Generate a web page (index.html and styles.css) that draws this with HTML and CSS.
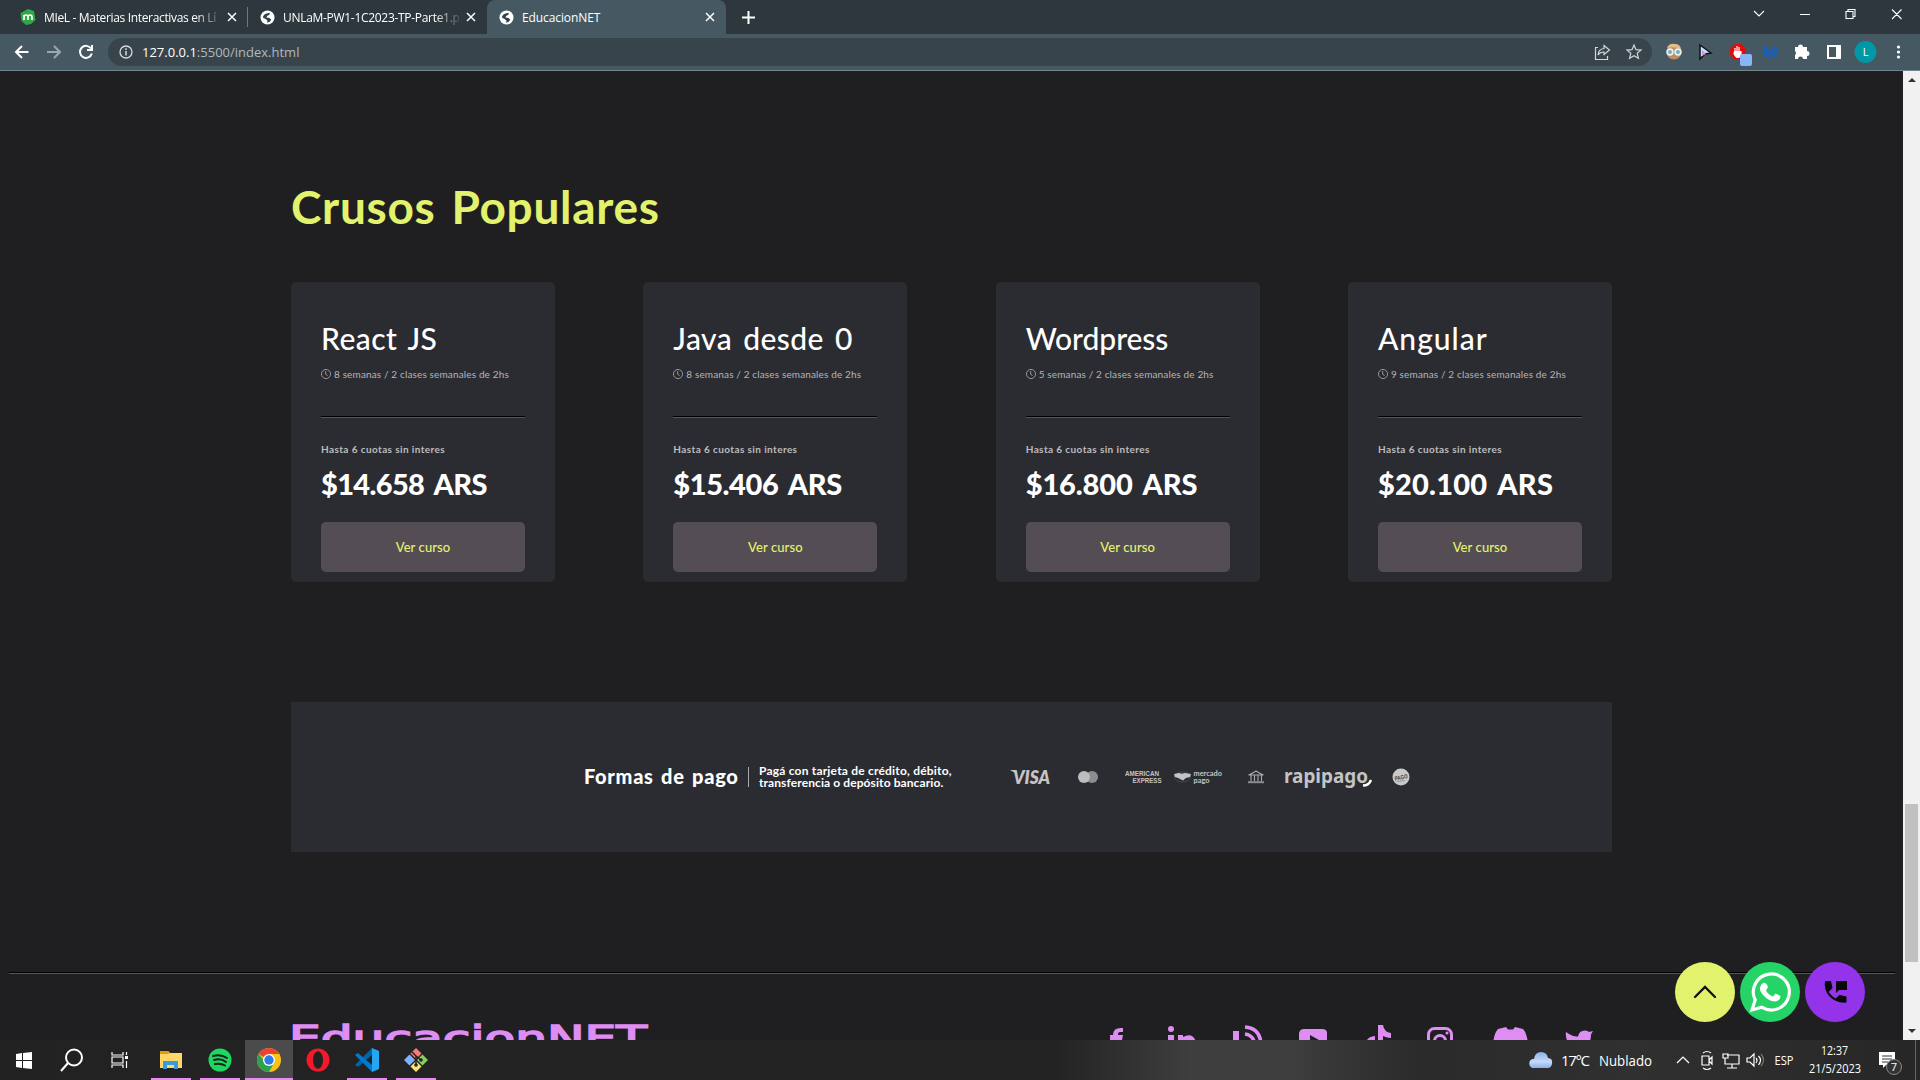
FILE: index.html
```html
<!DOCTYPE html>
<html lang="es"><head><meta charset="utf-8"><title>EducacionNET</title><link rel="stylesheet" href="styles.css"></head>
<body>
<svg class="defs" width="0" height="0">
<symbol id="globe" viewBox="0 0 16 16"><circle cx="8" cy="8" r="7.500" fill="#fff"/><path d="M3 8q1-4 5-4.500l2.500-.5-.5 2-2.500 1.500L7 8l3 .5 2 1.500-1.500 2.500-3 1 .5-2L6 9.500z" fill="#33434c"/></symbol>
<symbol id="x" viewBox="0 0 10 10"><path d="M1 1l8 8M9 1L1 9" stroke="#fff" stroke-width="1.500"/></symbol>
<symbol id="clock" viewBox="0 0 16 16"><g fill="none" stroke="#b5b5b8" stroke-width="1.200"><circle cx="8" cy="8" r="7.300"/><path d="M7.500 3v5.500l3 2"/></g></symbol>
</svg>
<header class="tabs">
 <div class="tab t1"><svg width="16" height="18" viewBox="0 0 16 18"><path d="M8 1l6 2 1.500 9-4.500 4-5 1-4.500-4-1-8z" fill="#31a846"/><path d="M4 12V7m0 2q0-2 2-2t2 2v3m0-3q0-2 2-2t2 2v3" fill="none" stroke="#fff" stroke-width="1.700"/></svg><span class="label fade">MIeL - Materias Interactivas en Lí</span><svg class="close" width="10" height="10"><use href="#x"/></svg></div>
 <i class="sep"></i>
 <div class="tab t2"><svg width="15" height="15"><use href="#globe"/></svg><span class="label fade">UNLaM-PW1-1C2023-TP-Parte1.p</span><svg class="close" width="10" height="10"><use href="#x"/></svg></div>
 <div class="tab t3"><svg width="15" height="15"><use href="#globe"/></svg><span class="label">EducacionNET</span><svg class="close" width="10" height="10"><use href="#x"/></svg></div>
 <svg class="plus" width="13" height="13" viewBox="0 0 13 13"><path d="M6.500 0v13M0 6.500h13" stroke="#fff" stroke-width="2"/></svg>
 <svg class="winctl" width="156" height="34" viewBox="0 0 156 34" fill="none" stroke="#fff" stroke-width="1.100"><path d="M4 11l5 5 5-5M50 14.500h10M96 11.500h7v7h-7zM98 11.500v-2h7v7h-2M142 9.500l9.500 9.500m0-9.500L142 19"/></svg>
</header>
<nav class="toolbar">
 <svg width="96" height="36" viewBox="0 0 96 36" fill="none" stroke="#fff" stroke-width="2"><path d="M28.500 18H16m6-6l-6 6 6 6"/><path d="M47 18h13m-6-6l6 6-6 6" stroke="#9ba7ad"/><path d="M91 14.500a6 6 0 1 0 .8 5M92 11v5h-5"/></svg>
 <div class="address"><svg width="14" height="14" viewBox="0 0 14 14"><circle cx="7" cy="7" r="6" fill="none" stroke="#d5dadd" stroke-width="1.300"/><path d="M7 6v4.500M7 3.300v1.600" stroke="#d5dadd" stroke-width="1.500"/></svg><span class="url">127.0.0.1<em>:5500/index.html</em></span>
 <svg class="share" width="46" height="18" viewBox="0 0 46 18" fill="none" stroke="#d0d6d9" stroke-width="1.200"><path d="M4 4.500H1.500v12h12V13M10 2.500l5.500 4.500-5.500 4.500V9q-4 0-6 3 .5-6 6-6.500zM40 2l2 4.700 5 .4-3.800 3.200 1.200 5L40 12.700l-4.400 2.600 1.200-5L33 7.100l5-.4z"/></svg></div>
 <svg class="ext" width="260" height="36" viewBox="0 0 260 36">
 <circle cx="22" cy="18" r="7.500" fill="#c28c62"/><path d="M15 14q2-5 8-4 5 0 6 5-7-3-14-1z" fill="#e3bd86"/><g fill="#7fa5ad" stroke="#dff3f5" stroke-width="1.800"><circle cx="18" cy="18" r="2.800"/><circle cx="26" cy="18" r="2.800"/></g>
 <path d="M48 11l11 8-6 1-5 5z" fill="#b9e5f6" stroke="#111" stroke-width="1.500"/><path d="M50 22v-6l4 4z" fill="#d48cea"/>
 <path d="M83 10h6l5 5v6l-5 5h-6l-5-5v-6z" fill="#e30b0b"/><path d="M83 18v-4m2 3v-5m2 5v-4M82.500 17.500h6.500v3q-1 3-4 3-2-1-3-4z" fill="#fff" stroke="#fff" stroke-width="1.200"/><rect x="88" y="20" width="12" height="12" rx="2" fill="#8ab4f8"/>
 <path d="M114 23q-4-5-1-10l5 6 5-6q3 5-1 10M114.500 18l3.500 5 3.500-5" fill="none" stroke="#1261c4" stroke-width="2"/>
 <path d="M143 13h3a2.500 2.500 0 0 1 5 0h4v4a2.500 2.500 0 0 1 0 5v3h-4a2.500 2.500 0 0 0-5 0h-3v-4a2.500 2.500 0 0 0 0-4z" fill="#fff"/>
 <path d="M175 11h14v14h-14zm2 2v10h7V13z" fill="#fff" fill-rule="evenodd"/><circle cx="213.500" cy="18" r="11" fill="#0097a7"/><text x="213.500" y="22" text-anchor="middle" font-size="11" fill="#fff">L</text>
 <g fill="#fff"><circle cx="246.500" cy="13" r="1.600"/><circle cx="246.500" cy="18" r="1.600"/><circle cx="246.500" cy="23" r="1.600"/></g></svg>
</nav>
<div class="viewport">
<main class="page">
 <h1>Crusos Populares</h1>
 <section class="cards">
 <article class="card"><h2 class="n1">React JS</h2><p class="time"><svg width="10" height="10"><use href="#clock"/></svg>8 semanas / 2 clases semanales de 2hs</p><hr><p class="fees">Hasta 6 cuotas sin interes</p><p class="price p1">$14.658 ARS</p><a class="btn">Ver curso</a></article>
 <article class="card"><h2 class="n2">Java desde 0</h2><p class="time"><svg width="10" height="10"><use href="#clock"/></svg>8 semanas / 2 clases semanales de 2hs</p><hr><p class="fees">Hasta 6 cuotas sin interes</p><p class="price p2">$15.406 ARS</p><a class="btn">Ver curso</a></article>
 <article class="card"><h2 class="n3">Wordpress</h2><p class="time"><svg width="10" height="10"><use href="#clock"/></svg>5 semanas / 2 clases semanales de 2hs</p><hr><p class="fees">Hasta 6 cuotas sin interes</p><p class="price p3">$16.800 ARS</p><a class="btn">Ver curso</a></article>
 <article class="card"><h2 class="n4">Angular</h2><p class="time"><svg width="10" height="10"><use href="#clock"/></svg>9 semanas / 2 clases semanales de 2hs</p><hr><p class="fees">Hasta 6 cuotas sin interes</p><p class="price p4">$20.100 ARS</p><a class="btn">Ver curso</a></article>
 </section>
 <section class="pay"><h3>Formas de pago</h3><i class="bar"></i><p>Pagá con tarjeta de crédito, débito,<br><span class="line2">transferencia o depósito bancario.</span></p>
 <svg class="brands" width="410" height="30" viewBox="0 0 410 30" fill="#c4c4c5">
 <path d="M0 8h5l2 4z"/><text x="3" y="22" font-size="18.500" font-weight="800" font-style="italic" textLength="37" lengthAdjust="spacingAndGlyphs">VISA</text>
 <circle cx="82" cy="15" r="6" fill="#8d8d90"/><circle cx="74" cy="15" r="6" fill="#bdbdbe"/>
 <text x="115" y="14" font-size="7" class="sans" textLength="34" lengthAdjust="spacingAndGlyphs">AMERICAN</text><text x="122.500" y="21" font-size="7" class="sans" textLength="29" lengthAdjust="spacingAndGlyphs">EXPRESS</text>
 <ellipse cx="172.500" cy="15" rx="8" ry="5" fill="none" stroke="#48494d"/><path d="M164 12l5-1 3 .7 3-.7 6 1-1 3-4 1-3 2.500-5-2.500-3-1z"/><text x="183.500" y="14" font-size="7.500" class="round" textLength="28.500" lengthAdjust="spacingAndGlyphs">mercado</text><text x="183.500" y="20.500" font-size="7.500" class="round" textLength="16" lengthAdjust="spacingAndGlyphs">pago</text>
 <path d="M238.500 13q3-1 7.500-4 4.500 3 7.500 4zM241 13v6m3.500-6v6m3.500-6v6m3.500-6v6" fill="none" stroke="#aaa" stroke-width="1.100"/><path d="M238 20.200h16" stroke="#8d8d90" stroke-width="2"/>
 <text x="274" y="21" class="rapi" textLength="84" lengthAdjust="spacingAndGlyphs">rapipago</text><path d="M353 23.500q6 0 8-5.500" fill="none" stroke="#fff" stroke-width="2.500"/>
 <circle cx="391" cy="15" r="8.500" fill="#c9c9c9"/><text x="384.500" y="17.500" class="fill" font-size="6" textLength="13" lengthAdjust="spacingAndGlyphs" transform="rotate(-12 391 15)">PAGO</text><path d="M387 19.500l8-1" stroke="#999"/></svg></section>
 <hr class="rule">
 <footer><svg class="brand" width="360" height="36" viewBox="0 0 360 36"><text x="-2" y="33" textLength="358" lengthAdjust="spacingAndGlyphs">EducacionNET</text></svg>
 <svg class="social" width="502" height="24" viewBox="0 0 502 24" fill="#de8df2"><path d="M3 24v-4H0v-5h3q0-8 10-7v4h-3q-2 0-2 3h5l-1 5H8v4z"/><circle cx="61" cy="9" r="3"/><path d="M58 15h6v9h-6zM68 15h5v2q10-5 13 5v2H68z"/><path d="M123 11h6v13h-6z"/><path d="M135 7q15 1 16 17M135 14q8 1 10 10" fill="none" stroke="#de8df2" stroke-width="3.500"/><path d="M189 13q1-4 5-4h18q5 0 5 4v11h-28zm11 2v9h4l5-4z" fill-rule="evenodd"/><path d="M256 24q0-7 9-8v8zM268 5h5q1 7 8 8v5q-4 0-8-2v8h-5z"/><rect x="318.500" y="8.500" width="23" height="24" rx="6" fill="none" stroke="#de8df2" stroke-width="3"/><circle cx="330" cy="21" r="5.500" fill="none" stroke="#de8df2" stroke-width="3"/><circle cx="337" cy="13" r="1.500"/><path d="M383 24q1-11 5-15l8-2 2 2.500h5l2-2.500 8 2q4 4 5 15h-9q-2-5-5-2l-1 2h-5l-1-2q-3-3-5 2z"/><path d="M456 12q7 5 12 4.500 1-6 7-6 3 0 4 1.500l4-1-2 3.500q0 5-2 9.500h-20q-4-6-3-12z"/></svg></footer>
</main>
<aside class="scroll"><svg width="17" height="17"><path d="M5 11h8L9 7z" fill="#333"/></svg><i></i><svg width="17" height="17"><path d="M5 6h8l-4 4z" fill="#333"/></svg></aside>
</div>
<div class="floats">
 <svg width="60" height="60"><circle cx="30" cy="30" r="30" fill="#e3f26c"/><path d="M20 35l10-10 10 10" fill="none" stroke="#111" stroke-width="2.300" stroke-linecap="round"/></svg>
 <svg width="60" height="60"><circle cx="30" cy="30" r="30" fill="#25d366"/><path d="M12 48l3.200-10a18 18 0 1 1 6.500 7.200z" fill="none" stroke="#fff" stroke-width="3.200"/><path d="M23 21q3-1 5 4l-2 3.500q2 4 7 6l2.500-3 5 2.500q0 5-6 5.500-6-.5-11-6-7-8-.5-12.500z" fill="#fff"/></svg>
 <svg width="60" height="60"><circle cx="30" cy="30" r="30" fill="#9333ea"/><path d="M20 19h6l1.500 7-4 4q3 4 7 6.500l4-3.500 7 1.500v6q-10 1-17-6-6-7-4.500-15.500zM31 19h11v9h-8l-3 3z" fill="#080808"/></svg>
</div>
<footer class="taskbar">
 <svg class="apps" width="440" height="40" viewBox="0 0 440 40">
 <path d="M16 14l6-1v7h-6zm7-1l9-1v8h-9zM16 21h6v7l-6-1zm7 0h9v8l-9-1z" fill="#fff"/>
 <circle cx="74" cy="17.500" r="8" fill="none" stroke="#fff" stroke-width="2"/><path d="M68 23l-7 8" stroke="#fff" stroke-width="2"/>
 <path d="M112 12v3h11v-3M112 28v-3h11v3M112 17h11v6h-11zM126.500 12v3m0 6v7" fill="none" stroke="#fff" stroke-width="1.200"/><path d="M125 16h3v3h-3z" fill="#fff"/>
 <path d="M160 11h8l2 2h12v15h-22z" fill="#ffd768"/><path d="M160 11h8l2 2-2 1h-8z" fill="#e59c0b"/><path d="M163 21h15v8h-4v-4h-7v4h-4z" fill="#3a9bdc"/>
 <circle cx="220" cy="20" r="11.500" fill="#1ed760"/><g fill="none" stroke="#142219" stroke-width="2" stroke-linecap="round"><path d="M213 16q8-2 14 2M214 20q7-2 12 2M215 24q6-1 10 1.500"/></g>
 <path d="M245 0h48v40h-48z" fill="#4b4b4b"/><circle cx="269" cy="20" r="12" fill="#fbc116"/><path d="M269 20L258.600 14A12 12 0 0 1 279.400 14H269z" fill="#ea4335"/><path d="M258.600 14A12 12 0 0 0 269 32l5-9-5 3z" fill="#2da14f"/><circle cx="269" cy="20" r="6" fill="#fff"/><circle cx="269" cy="20" r="4.700" fill="#287de8"/>
 <circle cx="318" cy="20" r="11.500" fill="#f01a2a"/><ellipse cx="318" cy="20" rx="5" ry="8.800" fill="#222"/>
 <path d="M372 8v7l-14 12-3-2z" fill="#0065a9"/><path d="M358 13l14 12v7l-17-17z" fill="#007acc"/><path d="M372 8l7 3v18l-7 3z" fill="#25a5f2"/>
 <path d="M416 8l5.500 5.500-5.500 5.500-5.500-5.500z" fill="#f47b78"/><path d="M409.500 14.500l5.500 5.500-5.500 5.500-5.500-5.500z" fill="#80b3ff"/><path d="M422.500 14.500l5.500 5.500-5.500 5.500-5.500-5.500z" fill="#86cf5c"/><path d="M416 21l5.500 5.500-5.500 5.500-5.500-5.500z" fill="#ffe079"/><path d="M412 12l4 4v10m0-10l5 4" fill="none" stroke="#222" stroke-width="1.500"/><circle cx="416" cy="25" r="1.800" fill="#222"/><circle cx="421" cy="20" r="1.800" fill="#222"/>
 <path d="M151 38h40v2h-40zm49 0h40v2h-40zm45 0h48v2h-48zm102 0h40v2h-40zm49 0h40v2h-40z" fill="#e78bf0"/></svg>
 <svg class="tray" width="400" height="40" viewBox="0 0 400 40" fill="#fff">
 <defs><linearGradient id="sky" x2="0" y2="1"><stop stop-color="#8fb0ea"/><stop offset=".6" stop-color="#c4daf8"/><stop offset="1" stop-color="#8eb0ea"/></linearGradient></defs>
 <path d="M12 28a5 5 0 0 1 0-9q2 0 2 0 1-7 7-7t7 6q5 0 4 6-1 4-4 4z" fill="url(#sky)"/><text x="41" y="25.500" font-size="15" textLength="29">17°C</text><text x="79" y="25.500" font-size="15" textLength="53" lengthAdjust="spacingAndGlyphs">Nublado</text>
 <g fill="none" stroke="#fff" stroke-width="1.200"><path d="M157 23l6-6 6 6M182 16h7v9h-7zM189 20l3-3v7l-3-3M183 13q4-3 8 0M183 28q4 3 8 0M207 15h12v9h-14v-6M203 14h5v4h-5zM212 24v4m-5 0h10M227 18h3l4-4v12l-4-4h-3zM236 18q2 2 0 5M238.500 16q4 4 0 9"/><path d="M241 14q5 6 0 12" stroke="#777"/></g>
 <text x="254.500" y="24.500" font-size="12.500" textLength="19" lengthAdjust="spacingAndGlyphs">ESP</text><text x="301" y="15" font-size="12.500" textLength="27" lengthAdjust="spacingAndGlyphs">12:37</text><text x="289" y="33" font-size="12.500" textLength="52" lengthAdjust="spacingAndGlyphs">21/5/2023</text>
 <path d="M359 12h16v13h-9l-3 3v-3h-4z"/><path d="M362 16h10m-10 3h10m-10 3h6" stroke="#333"/><circle cx="374" cy="27" r="7.500" fill="#333" stroke="#888"/><text x="374" y="31" font-size="11" text-anchor="middle">7</text><path d="M395.500 0v40" stroke="#666"/></svg>
</footer>
</body></html>
```
FILE: styles.css
```css
* { box-sizing: border-box; }
body { margin: 0; width: 1920px; height: 1080px; overflow: hidden; display: flex; flex-direction: column; background: #1f1f21; color: #fff; font-family: "Open Sans", sans-serif; }
p, h1, h2, h3 { margin: 0; }
svg { flex: none; display: block; }
.defs { position: absolute; }
.tabs { height: 34px; background: #2d373d; display: flex; align-items: center; flex: none; }
.tab { height: 34px; display: flex; align-items: center; font-size: 12px; letter-spacing: -.1px; }
.t1 { width: 247px; padding: 0 10px 0 20px; letter-spacing: -.34px; }
.t2 { width: 239px; padding: 0 11px 0 12px; letter-spacing: -.3px; }
.t3 { width: 239px; padding: 0 11px 0 12px; background: #465962; border-radius: 8px 8px 0 0; }
.label { flex: 1; margin: 0 8px; white-space: nowrap; overflow: hidden; }
.fade { margin-right: 3px; -webkit-mask-image: linear-gradient(90deg, #000 84%, transparent); }
.sep { width: 1px; height: 20px; background: #6c7980; }
.plus { margin-left: 16px; }
.winctl { margin-left: auto; margin-right: 14px; }
.toolbar { height: 37px; background: #465962; border-bottom: 1px solid #71868d; display: flex; align-items: center; flex: none; }
.address { margin-left: 12px; width: 1544px; height: 28px; border-radius: 14px; background: #38444b; display: flex; align-items: center; padding: 0 8px 0 11px; }
.url { font-size: 13px; margin-left: 9px; }
.url em { color: #b0b8bc; font-style: normal; }
.share { margin-left: auto; overflow: visible; margin-right: 4px; }
.viewport { height: 969px; flex: none; display: flex; overflow: hidden; font-family: Lato, sans-serif; }
.page { width: 1903px; padding: 108px 8px 0; background: #1f1f21; }
h1 { margin: 0 283px; height: 103px; line-height: 55px; font-size: 46px; font-weight: 700; color: #e3f26c; letter-spacing: .7px; word-spacing: 4px; }
.cards { margin: 0 283px; height: 300px; display: grid; grid-template-columns: repeat(4, 264px); justify-content: space-between; }
.card { background: #2b2c32; border-radius: 5px; padding: 38px 30px 10px; display: flex; flex-direction: column; }
h2 { font-size: 30px; line-height: 36px; font-weight: 500; white-space: nowrap; word-spacing: 3px; }
.n1, .n2 { letter-spacing: .45px; }
.n3 { letter-spacing: -.05px; }
.n4 { letter-spacing: 1px; }
.time { height: 17px; margin-top: 9px; display: flex; align-items: center; gap: 3px; font-size: 10px; letter-spacing: .14px; color: #b5b5b8; white-space: nowrap; }
.card hr { width: 100%; height: 2px; margin: 34px 0 0; border: 0; border-top: 1px solid #000; border-bottom: 1px solid #55565a; }
.fees { margin-top: 23px; line-height: 16px; font-size: 10px; font-weight: 700; letter-spacing: .4px; color: #bdbdbf; }
.price { margin-top: 11px; line-height: 32px; font-size: 29px; font-weight: 900; white-space: nowrap; word-spacing: 4px; }
.p1 { letter-spacing: -.65px; }
.p2 { letter-spacing: -.4px; }
.p3 { letter-spacing: -.1px; }
.p4 { letter-spacing: .2px; }
.btn { margin-top: auto; height: 50px; padding-bottom: 1px; border-radius: 5px; background: #544e54; color: #e3f26c; display: flex; align-items: center; justify-content: center; font-size: 13px; font-weight: 500; letter-spacing: .1px; flex: none; }
.pay { margin: 120px 283px 0; height: 150px; background: #2b2c32; display: flex; align-items: center; padding-left: 293px; }
h3 { width: 164px; padding-bottom: 2px; font-size: 20px; font-weight: 900; letter-spacing: .7px; word-spacing: 2px; white-space: nowrap; }
.bar { width: 1px; height: 20px; background: #aaa; }
.pay p { width: 242px; margin-left: 10px; padding-bottom: 1px; font-size: 12px; line-height: 12px; font-weight: 700; letter-spacing: .2px; white-space: nowrap; }
.line2 { letter-spacing: .1px; }
.brands { margin-left: 9px; }
.sans { font-family: "Liberation Sans", sans-serif; font-weight: 700; }
.round { font-family: Lato, sans-serif; font-weight: 700; }
.fill { font-family: "Liberation Sans", sans-serif; font-weight: 700; fill: #444; }
.rapi { font-family: "Noto Sans", sans-serif; font-size: 19px; font-weight: 700; }
.rule { height: 2px; margin: 120px 0 0 1px; border: 0; border-top: 1px solid #000; border-bottom: 1px solid #55565a; }
.page footer { margin: 43px 283px 0; display: flex; justify-content: space-between; align-items: flex-start; }
.brand { font-family: "DejaVu Sans", sans-serif; font-size: 34px; fill: #de8df2; stroke: #de8df2; stroke-width: 1.6px; overflow: visible; }
.social { margin-top: 3px; }
.scroll { width: 17px; background: #f1f1f1; display: flex; flex-direction: column; }
.scroll i { margin: 716px 2px auto; height: 158px; background: #c1c1c1; }
.floats { position: absolute; left: 1675px; top: 962px; display: flex; gap: 5px; }
.taskbar { height: 40px; flex: none; display: flex; justify-content: space-between; background: linear-gradient(90deg, #222 0%, #232323 55%, #3e3e3e 62%, #3e3e3e 67%, #2a2a2a 74%, #303030 85%, #272727 100%); }
```
